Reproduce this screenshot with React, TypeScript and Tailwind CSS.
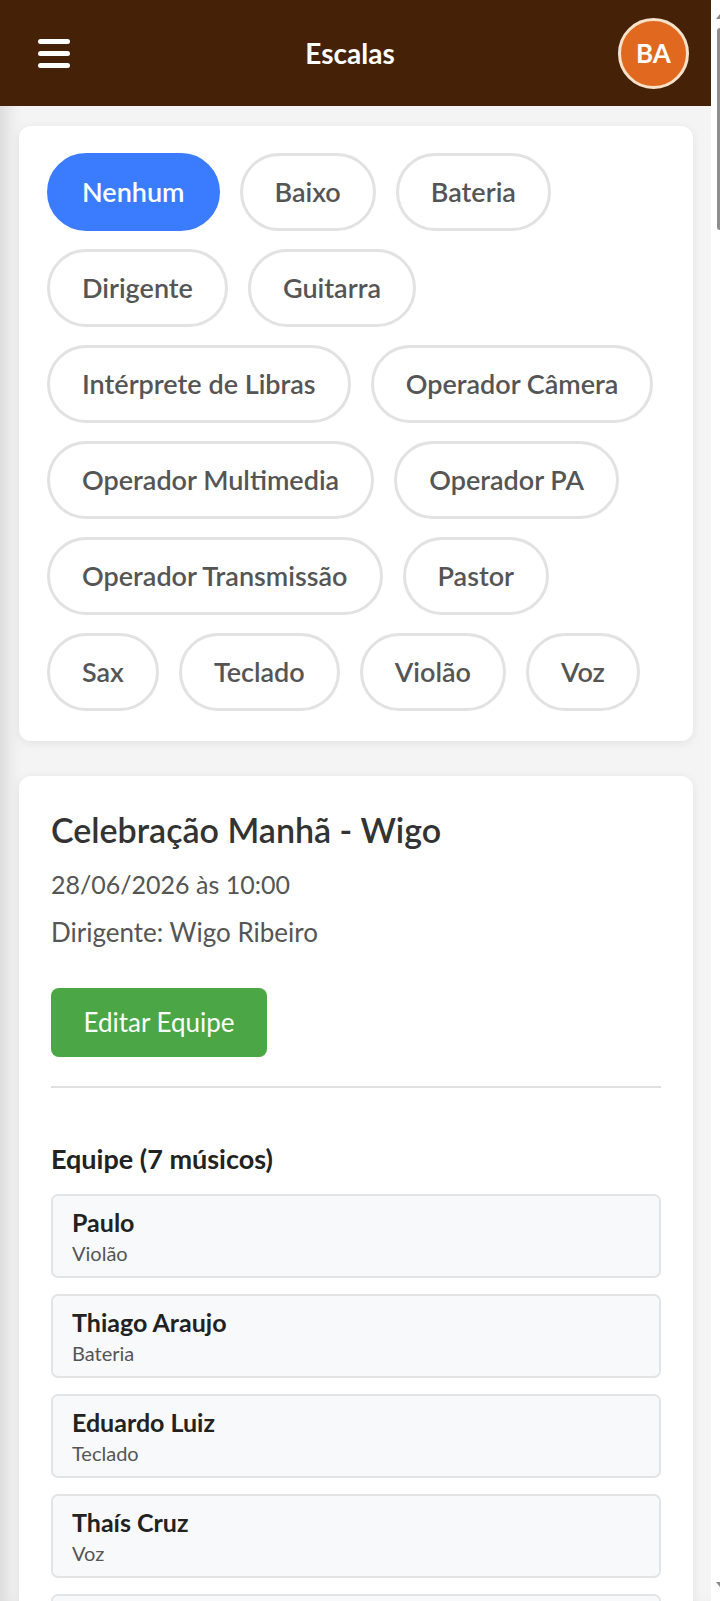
import React from "react";

const roles = [
  "Nenhum",
  "Baixo",
  "Bateria",
  "Dirigente",
  "Guitarra",
  "Intérprete de Libras",
  "Operador Câmera",
  "Operador Multimedia",
  "Operador PA",
  "Operador Transmissão",
  "Pastor",
  "Sax",
  "Teclado",
  "Violão",
  "Voz",
];

const team = [
  { name: "Paulo", role: "Violão" },
  { name: "Thiago Araujo", role: "Bateria" },
  { name: "Eduardo Luiz", role: "Teclado" },
  { name: "Thaís Cruz", role: "Voz" },
  { name: "Lucas Mendes", role: "Guitarra" },
];

function Header() {
  return (
    <header className="flex h-[106px] shrink-0 items-center justify-between bg-[#452207] pl-[38px] pr-[22px]">
      {/* hamburger */}
      <button className="flex w-[32px] flex-col gap-[7px]">
        <span className="h-[5px] w-full rounded-full bg-white" />
        <span className="h-[5px] w-full rounded-full bg-white" />
        <span className="h-[5px] w-full rounded-full bg-white" />
      </button>
      <h1 className="ml-[12px] text-[28px] font-bold text-white">Escalas</h1>
      <div className="flex h-[71px] w-[71px] items-center justify-center rounded-full border-[3px] border-[#f6e2c8] bg-[#e0681f] text-[26px] font-bold text-white">
        BA
      </div>
    </header>
  );
}

function RoleFilter() {
  return (
    <section className="rounded-[12px] bg-white px-[28px] pt-[27px] pb-[30px] shadow-[0_2px_10px_rgba(0,0,0,0.08)]">
      <div className="flex flex-wrap gap-x-[20px] gap-y-[18px]">
        {roles.map((r, i) => (
          <button
            key={r}
            className={
              i === 0
                ? "h-[78px] rounded-full border-[3px] border-[#3b7cff] bg-[#3b7cff] px-[32px] text-[27px] font-semibold text-white"
                : "h-[78px] rounded-full border-[3px] border-[#e2e2e2] bg-white px-[32px] text-[27px] font-semibold text-[#555555]"
            }
          >
            {r}
          </button>
        ))}
      </div>
    </section>
  );
}

function ScaleCard() {
  return (
    <section className="rounded-t-[12px] bg-white px-[32px] pt-[33px] shadow-[0_2px_10px_rgba(0,0,0,0.08)]">
      <h2 className="text-[34px] leading-[42px] font-semibold text-[#333333]">
        Celebração Manhã - Wigo
      </h2>
      <p className="mt-[17px] text-[25px] leading-[32px] text-[#555555]">
        28/06/2026 às 10:00
      </p>
      <p className="mt-[16px] text-[26px] leading-[32px] text-[#555555]">
        Dirigente: Wigo Ribeiro
      </p>
      <button className="mt-[40px] h-[69px] w-[216px] rounded-[8px] bg-[#4ba745] text-[26px] text-white">
        Editar Equipe
      </button>
      <div className="mt-[29px] h-[2px] bg-[#e0e0e0]" />
      <h3 className="mt-[55px] text-[27px] leading-[32px] font-bold text-[#222222]">
        Equipe (7 músicos)
      </h3>
      <ul className="mt-[19px] flex flex-col gap-[16px]">
        {team.map((m) => (
          <li
            key={m.name}
            className="rounded-[7px] border-2 border-[#e3e4e6] bg-[#f8f9fa] px-[19px] pt-[12px] pb-[11px]"
          >
            <div className="text-[25px] leading-[28px] font-bold text-[#222222]">
              {m.name}
            </div>
            <div className="mt-[5px] text-[20px] leading-[24px] text-[#555555]">
              {m.role}
            </div>
          </li>
        ))}
      </ul>
    </section>
  );
}

function Scrollbar() {
  return (
    <div className="flex w-[9px] shrink-0 flex-col bg-white">
      <div className="mt-[14px] ml-[5px] h-0 w-0 border-x-[4px] border-b-[5px] border-x-transparent border-b-[#8a8a8a]" />
      <div className="mt-[9px] ml-[6px] h-[202px] w-[3px] rounded-l-[3px] bg-[#8f8f8f]" />
      <div className="flex-1" />
      <div className="mb-[14px] ml-[5px] h-0 w-0 border-x-[4px] border-t-[5px] border-x-transparent border-t-[#8a8a8a]" />
    </div>
  );
}

export default function App() {
  return (
    <div
      className="flex h-[1601px] w-[720px] overflow-hidden bg-[#f4f4f4]"
      style={{ fontFamily: "Lato, 'Noto Sans', sans-serif" }}
    >
      <div className="flex min-w-0 flex-1 flex-col shadow-[inset_18px_0_18px_-12px_rgba(0,0,0,0.12)]">
        <Header />
        <main className="flex flex-col gap-[35px] pt-[20px] pl-[19px] pr-[18px]">
          <RoleFilter />
          <ScaleCard />
        </main>
      </div>
      <Scrollbar />
    </div>
  );
}
